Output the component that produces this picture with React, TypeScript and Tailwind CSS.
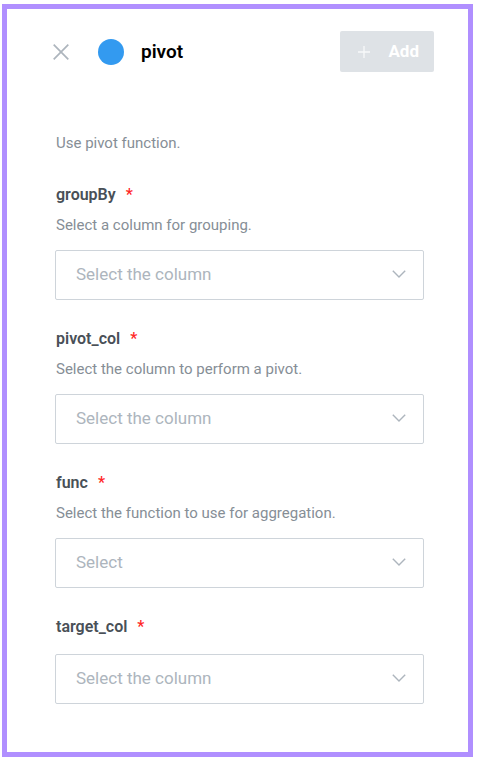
import React from "react";

type Field = {
  name: string;
  description?: string;
  placeholder: string;
};

const fields: Field[] = [
  { name: "groupBy", description: "Select a column for grouping.", placeholder: "Select the column" },
  { name: "pivot_col", description: "Select the column to perform a pivot.", placeholder: "Select the column" },
  { name: "func", description: "Select the function to use for aggregation.", placeholder: "Select" },
  { name: "target_col", placeholder: "Select the column" },
];

function SelectField({ name, description, placeholder }: Field) {
  return (
    <div className="flex flex-col">
      <label htmlFor={name} className="flex gap-2.5 pl-px text-base leading-6 font-semibold text-[#495057]">
        {name}
        <span className="font-medium text-[#ff2626]">*</span>
      </label>
      {description && (
        <p id={`${name}-description`} className="mt-2 pl-px text-[15px] leading-5 text-[#868e96]">
          {description}
        </p>
      )}
      <div className="relative mt-[15px]">
        <select
          id={name}
          required
          defaultValue=""
          aria-describedby={description ? `${name}-description` : undefined}
          className="h-[50px] w-full appearance-none rounded-xs border border-[#ced4da] bg-white px-5 text-[17px] text-[#adb5bd]"
        >
          <option value="">{placeholder}</option>
        </select>
        <svg
          aria-hidden="true"
          viewBox="0 0 14 8"
          className="pointer-events-none absolute top-5 right-[18px] h-2 w-3.5"
          fill="none"
          stroke="#adb5bd"
          strokeWidth="1.4"
        >
          <path d="M0.8 0.8 7 7 13.2 0.8" />
        </svg>
      </div>
    </div>
  );
}

export default function App() {
  return (
    <div className="bg-white pt-1 pr-2.5 pb-[5px] pl-0.5 font-[Roboto,sans-serif]">
      <main className="border-5 border-[#b08fff] pb-12">
        <header className="flex items-center pt-[22px] pr-[34px] pl-[46px]">
          <button type="button" aria-label="Close" className="size-4">
            <svg viewBox="0 0 16 16" className="size-4" fill="none" stroke="#adb5bd" strokeWidth="1.7">
              <path d="M0.7 0.7 15.3 15.3M15.3 0.7 0.7 15.3" />
            </svg>
          </button>
          <span className="ml-[29px] size-[26px] rounded-full bg-[#339af0]" />
          <h1 className="ml-[17px] text-[19px] leading-6 font-semibold text-black">pivot</h1>
          <button
            type="button"
            disabled
            className="ml-auto flex h-[41px] items-center gap-[18px] rounded-xs bg-[#dee2e6] pr-[15px] pl-[18px] text-[17px] font-bold text-white"
          >
            <svg aria-hidden="true" viewBox="0 0 12 12" className="size-3" fill="none" stroke="#f8f9fa" strokeWidth="1.3">
              <path d="M6 0V12M0 6H12" />
            </svg>
            Add
          </button>
        </header>
        <form className="mt-[61px] flex flex-col pr-11 pl-12">
          <p className="pl-px text-[15px] leading-5 text-[#868e96]">Use pivot function.</p>
          <div className="mt-[30px] flex flex-col gap-[27px]">
            {fields.map((field) => (
              <SelectField key={field.name} {...field} />
            ))}
          </div>
        </form>
      </main>
    </div>
  );
}
